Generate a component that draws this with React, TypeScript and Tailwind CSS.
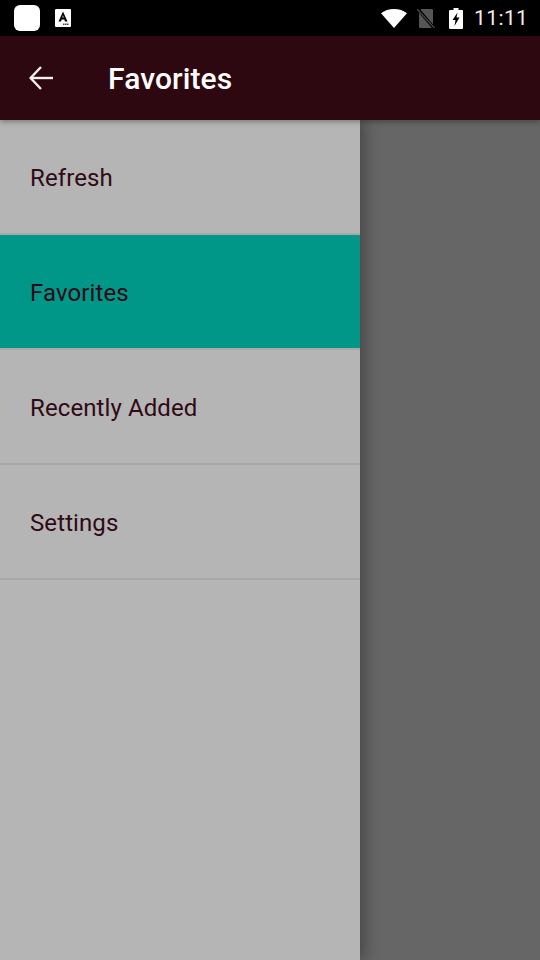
const items = ["Refresh", "Favorites", "Recently Added", "Settings"];

const StatusBar = () => (
  <div className="h-[36px] bg-black flex items-center justify-between shrink-0">
    <div className="flex items-center">
      <div className="ml-[14px] w-[26px] h-[26px] rounded-[6px] bg-white" />
      <svg className="ml-[15px]" width="16" height="18" viewBox="0 0 16 18">
        <rect x="0" y="0" width="16" height="18" rx="1" fill="#fff" />
        <path d="M8 2.5 L12.5 12.5 H10 L9.3 10.5 H6.7 L6 12.5 H3.5 Z M7.3 8.6 H8.7 L8 6.2 Z" fill="#000" fillRule="evenodd" />
        <rect x="8" y="14.5" width="1.5" height="1.5" fill="#444" />
        <rect x="10" y="14.5" width="1.5" height="1.5" fill="#444" />
        <rect x="12" y="14.5" width="1.5" height="1.5" fill="#444" />
      </svg>
    </div>
    <div className="flex items-center">
      <svg width="26" height="19" viewBox="0 0 26 19">
        <path d="M13 19 L0 4.2 C3.5 1.6 8 0 13 0 C18 0 22.5 1.6 26 4.2 Z" fill="#fff" />
      </svg>
      <svg className="ml-[10px]" width="18" height="19" viewBox="0 0 18 19">
        <path d="M4 0 H15 Q16 0 16 1 V19 H3 Q2 19 2 18 V2 Z" fill="#555" />
        <path d="M0 -1 L17 19" stroke="#000" strokeWidth="3.2" />
        <path d="M0 0 L17.5 19" stroke="#4a4a4a" strokeWidth="1.2" />
      </svg>
      <svg className="ml-[14px]" width="14" height="21" viewBox="0 0 14 21">
        <path d="M4.5 0 H9.5 V2 H13 Q14 2 14 3 V20 Q14 21 13 21 H1 Q0 21 0 20 V3 Q0 2 1 2 H4.5 Z" fill="#fff" />
        <path d="M8.5 4.5 L3.5 12 H6.5 L5.5 18 L10.5 9.5 H7.5 Z" fill="#000" />
      </svg>
      <span className="ml-[11px] mr-[13px] w-[53px] text-[21px] leading-none text-[#eeeeee] tracking-[0.4px] font-['Roboto',sans-serif]">11:11</span>
    </div>
  </div>
);

const App = () => (
  <div className="w-[540px] h-[960px] flex flex-col overflow-hidden font-['Roboto',sans-serif]">
    <StatusBar />
    <div className="h-[84px] bg-[#2e0810] flex items-center shrink-0 relative z-10 shadow-[0_2px_5px_rgba(0,0,0,0.3)]">
      <svg className="ml-[29px]" width="24" height="24" viewBox="0 0 24 24" fill="none" stroke="#f4f0f0" strokeWidth="2.4">
        <path d="M1.5 12 H24" />
        <path d="M12 1 L1.6 12 L12 23" />
      </svg>
      <h1 className="ml-[55px] pt-[2px] text-[30px] font-medium tracking-[0.1px] text-white leading-none">Favorites</h1>
    </div>
    <div className="flex-1 flex bg-[#666666]">
      <div className="w-[360px] bg-[#b5b5b5] flex flex-col shadow-[4px_0_16px_rgba(0,0,0,0.35)] relative">
        {items.map((item) => (
          <div
            key={item}
            className={`h-[115px] flex items-center pl-[30px] pt-[3px] border-b-2 border-[#a8a8a8] text-[24px] tracking-[0.1px] text-[#300a14] ${item === "Favorites" ? "bg-[#009688]" : ""}`}
          >
            {item}
          </div>
        ))}
      </div>
    </div>
  </div>
);

export default App;
